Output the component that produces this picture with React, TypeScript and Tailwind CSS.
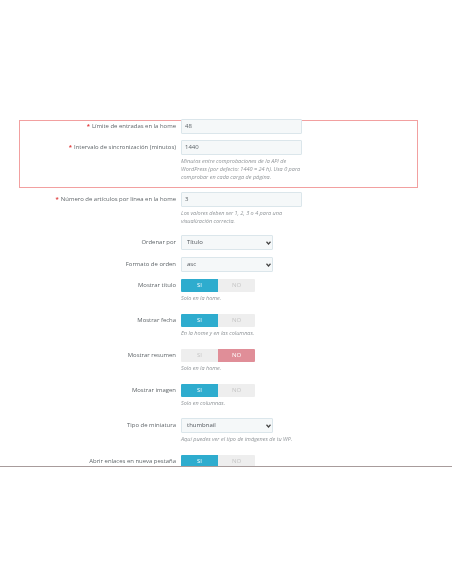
import React from "react";

function Label({ children, req, short }: { children: React.ReactNode; req?: boolean; short?: boolean }) {
  return (
    <div className={`w-[176px] shrink-0 text-right text-[5.95px] text-[#5f6569] whitespace-nowrap ${short ? "leading-[13px]" : "leading-[15px]"}`}>
      {req && <span className="text-[#e04040] font-bold mr-[2px]">*</span>}
      {children}
    </div>
  );
}

function Help({ lines }: { lines: string[] }) {
  return (
    <div className="mt-[2px] text-[5.5px] leading-[8px] italic text-[#8f9498] whitespace-nowrap">
      {lines.map((l) => (
        <div key={l}>{l}</div>
      ))}
    </div>
  );
}

function Row({ label, req, children, help, mb, short }: { label: string; req?: boolean; children: React.ReactNode; help?: string[]; mb: string; short?: boolean }) {
  return (
    <div className={`flex gap-[5px] ${mb}`}>
      <Label req={req} short={short}>{label}</Label>
      <div>
        {children}
        {help && <Help lines={help} />}
      </div>
    </div>
  );
}

function TextBox({ value }: { value: string }) {
  return (
    <div className="w-[121px] h-[15px] rounded-[1px] bg-[#f5f8f9] border border-[#dbe6eb] pl-[3px] text-[6px] leading-[13px] text-[#5c6368]">
      {value}
    </div>
  );
}

function SelectBox({ value }: { value: string }) {
  return (
    <div className="w-[92px] h-[15px] rounded-[1px] bg-[#f5f8f9] border border-[#dbe6eb] pl-[5px] pr-[1px] flex items-center justify-between text-[6px] text-[#4f555a]">
      <span>{value}</span>
      <svg width="5" height="4" viewBox="0 0 10 8" fill="none" stroke="#444" strokeWidth="2.4">
        <path d="M1 1.5 5 6 9 1.5" />
      </svg>
    </div>
  );
}

function Toggle({ on }: { on: boolean }) {
  return (
    <div className="flex w-[74px] h-[13px] text-[6px] leading-[13px] text-center rounded-[1px] overflow-hidden">
      <div className={`w-[37px] ${on ? "bg-[#2eacce] text-white" : "bg-[#eeeeee] text-[#c4c4c4]"}`}>SI</div>
      <div className={`w-[37px] ${on ? "bg-[#eeeeee] text-[#c4c4c4]" : "bg-[#e08e98] text-white"}`}>NO</div>
    </div>
  );
}

export default function App() {
  return (
    <div className="w-[452px] h-[584px] bg-white overflow-hidden pt-[119px] font-['Open_Sans',sans-serif] blur-[0.35px]">
      <div className="h-[348px] overflow-hidden border-b border-[#a89c9c]">
        <div className="ml-[19px] mt-px w-[399px] h-[68px] border border-[#f2a0a0]">
          <div className="-ml-[20px] -mt-[2px]">
            <Row label="Límite de entradas en la home" req mb="mb-[6px]">
              <TextBox value="48" />
            </Row>
            <Row
              label="Intervalo de sincronización (minutos)"
              req
              mb="mb-0"
              help={[
                "Minutos entre comprobaciones de la API de",
                "WordPress (por defecto: 1440 = 24 h). Usa 0 para",
                "comprobar en cada carga de página.",
              ]}
            >
              <TextBox value="1440" />
            </Row>
          </div>
        </div>
        <div className="mt-[4px]">
          <Row
            label="Número de artículos por línea en la home"
            req
            mb="mb-[10px]"
            help={["Los valores deben ser 1, 2, 3 o 4 para una", "visualización correcta."]}
          >
            <TextBox value="3" />
          </Row>
          <Row label="Ordenar por" mb="mb-[7px]">
            <SelectBox value="Título" />
          </Row>
          <Row label="Formato de orden" mb="mb-[7px]">
            <SelectBox value="asc" />
          </Row>
          <Row label="Mostrar título" short mb="mb-[12px]" help={["Solo en la home."]}>
            <Toggle on />
          </Row>
          <Row label="Mostrar fecha" short mb="mb-[12px]" help={["En la home y en las columnas."]}>
            <Toggle on />
          </Row>
          <Row label="Mostrar resumen" short mb="mb-[12px]" help={["Solo en la home."]}>
            <Toggle on={false} />
          </Row>
          <Row label="Mostrar imagen" short mb="mb-[11px]" help={["Solo en columnas."]}>
            <Toggle on />
          </Row>
          <Row label="Tipo de miniatura" mb="mb-[12px]" help={["Aquí puedes ver el tipo de imágenes de tu WP."]}>
            <SelectBox value="thumbnail" />
          </Row>
          <Row label="Abrir enlaces en nueva pestaña" short mb="mb-0">
            <Toggle on />
          </Row>
        </div>
      </div>
    </div>
  );
}
